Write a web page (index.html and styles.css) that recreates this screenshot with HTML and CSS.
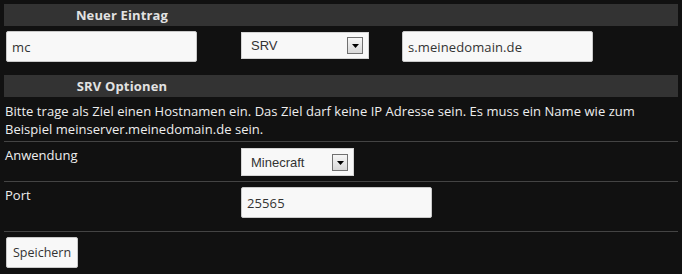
FILE: index.html
```html
<!DOCTYPE html>
<html lang="de">
<head>
<meta charset="utf-8">
<title>Neuer Eintrag</title>
<link rel="stylesheet" href="styles.css">
</head>
<body>
<div class="page">
  <div class="bar"><span class="bar-title">Neuer Eintrag</span></div>
  <div class="entry-row">
    <div class="c1"><input class="field" type="text" value="mc"></div>
    <div class="c2">
      <div class="select w-srv"><span class="select-text">SRV</span><span class="arrow"><svg width="7" height="4" viewBox="0 0 7 4"><path d="M0 0H7L3.5 4Z" fill="#000"/></svg></span></div>
    </div>
    <div class="c3"><input class="field" type="text" value="s.meinedomain.de"></div>
  </div>
  <div class="bar"><span class="bar-title">SRV Optionen</span></div>
  <p class="desc">Bitte trage als Ziel einen Hostnamen ein. Das Ziel darf keine IP Adresse sein. Es muss ein Name wie zum Beispiel meinserver.meinedomain.de sein.</p>
  <div class="form-row row-app">
    <div class="label">Anwendung</div>
    <div class="control">
      <div class="select w-mc"><span class="select-text">Minecraft</span><span class="arrow"><svg width="7" height="4" viewBox="0 0 7 4"><path d="M0 0H7L3.5 4Z" fill="#000"/></svg></span></div>
    </div>
  </div>
  <div class="form-row row-port">
    <div class="label">Port</div>
    <div class="control"><input class="field" type="text" value="25565"></div>
  </div>
  <div class="actions"><button class="btn" type="button">Speichern</button></div>
</div>
</body>
</html>
```
FILE: styles.css
```css
html, body {
  margin: 0;
  padding: 0;
  background: #111111;
}
body {
  font-family: "Open Sans", "Noto Sans", sans-serif;
  font-size: 13px;
  color: #eeeeee;
}
.page {
  padding: 4px 4px 0 4px;
}
.bar {
  height: 22px;
  background: #333333;
  display: flex;
  align-items: center;
}
.bar-title {
  width: 236px;
  text-align: center;
  font-weight: bold;
  font-size: 13px;
  letter-spacing: 0.15px;
  color: #e2e2e2;
}
.entry-row {
  display: flex;
  align-items: flex-start;
  padding: 5px 0 13px 0;
}
.c1 {
  width: 234px;
  padding-left: 2px;
}
.c2 {
  width: 159px;
  padding-left: 1px;
  padding-top: 1px;
}
.c3 {
  padding-left: 2px;
}
.field {
  box-sizing: border-box;
  width: 191px;
  height: 31px;
  margin: 0;
  border: 1px solid #c9c9c9;
  border-radius: 2px;
  background: #f8f8f8;
  padding: 0 5px;
  font-family: "Open Sans", "Noto Sans", sans-serif;
  font-size: 13px;
  letter-spacing: 0.1px;
  color: #333333;
  outline: none;
}
.select {
  box-sizing: border-box;
  display: flex;
  align-items: center;
  border: 1px solid #d4d4d4;
  background: #f8f8f8;
  padding-left: 9px;
  font-family: "Liberation Sans", Arial, sans-serif;
  font-size: 13px;
  color: #333333;
}
.w-srv {
  width: 128px;
  height: 27px;
}
.w-mc {
  width: 113px;
  height: 28px;
}
.select-text {
  flex: 1;
}
.arrow {
  box-sizing: border-box;
  width: 16px;
  height: 17px;
  margin-right: 5px;
  border: 1px solid #707070;
  background: linear-gradient(#f6f6f6, #d8d8d8);
  display: flex;
  align-items: center;
  justify-content: center;
}
.arrow svg {
  display: block;
  margin-top: 1px;
}
.desc {
  margin: 0;
  padding: 5px 0 3px 1px;
  line-height: 18px;
  font-size: 13px;
  letter-spacing: 0.04px;
}
.form-row {
  display: flex;
  align-items: flex-start;
  border-top: 1px solid #444444;
}
.label {
  width: 236px;
  padding: 4px 0 0 1px;
  line-height: 18px;
  font-size: 13px;
}
.row-app .control {
  padding: 6px 0 5px 0;
}
.row-port .control {
  padding: 5px 0 13px 0;
}
.actions {
  border-top: 1px solid #444444;
  padding: 5px 0 0 2px;
}
.btn {
  box-sizing: border-box;
  height: 31px;
  margin: 0;
  padding: 0 6px;
  border: 1px solid #c9c9c9;
  border-radius: 2px;
  background: #f8f8f8;
  font-family: "Open Sans", "Noto Sans", sans-serif;
  font-size: 12.5px;
  color: #333333;
}
```
